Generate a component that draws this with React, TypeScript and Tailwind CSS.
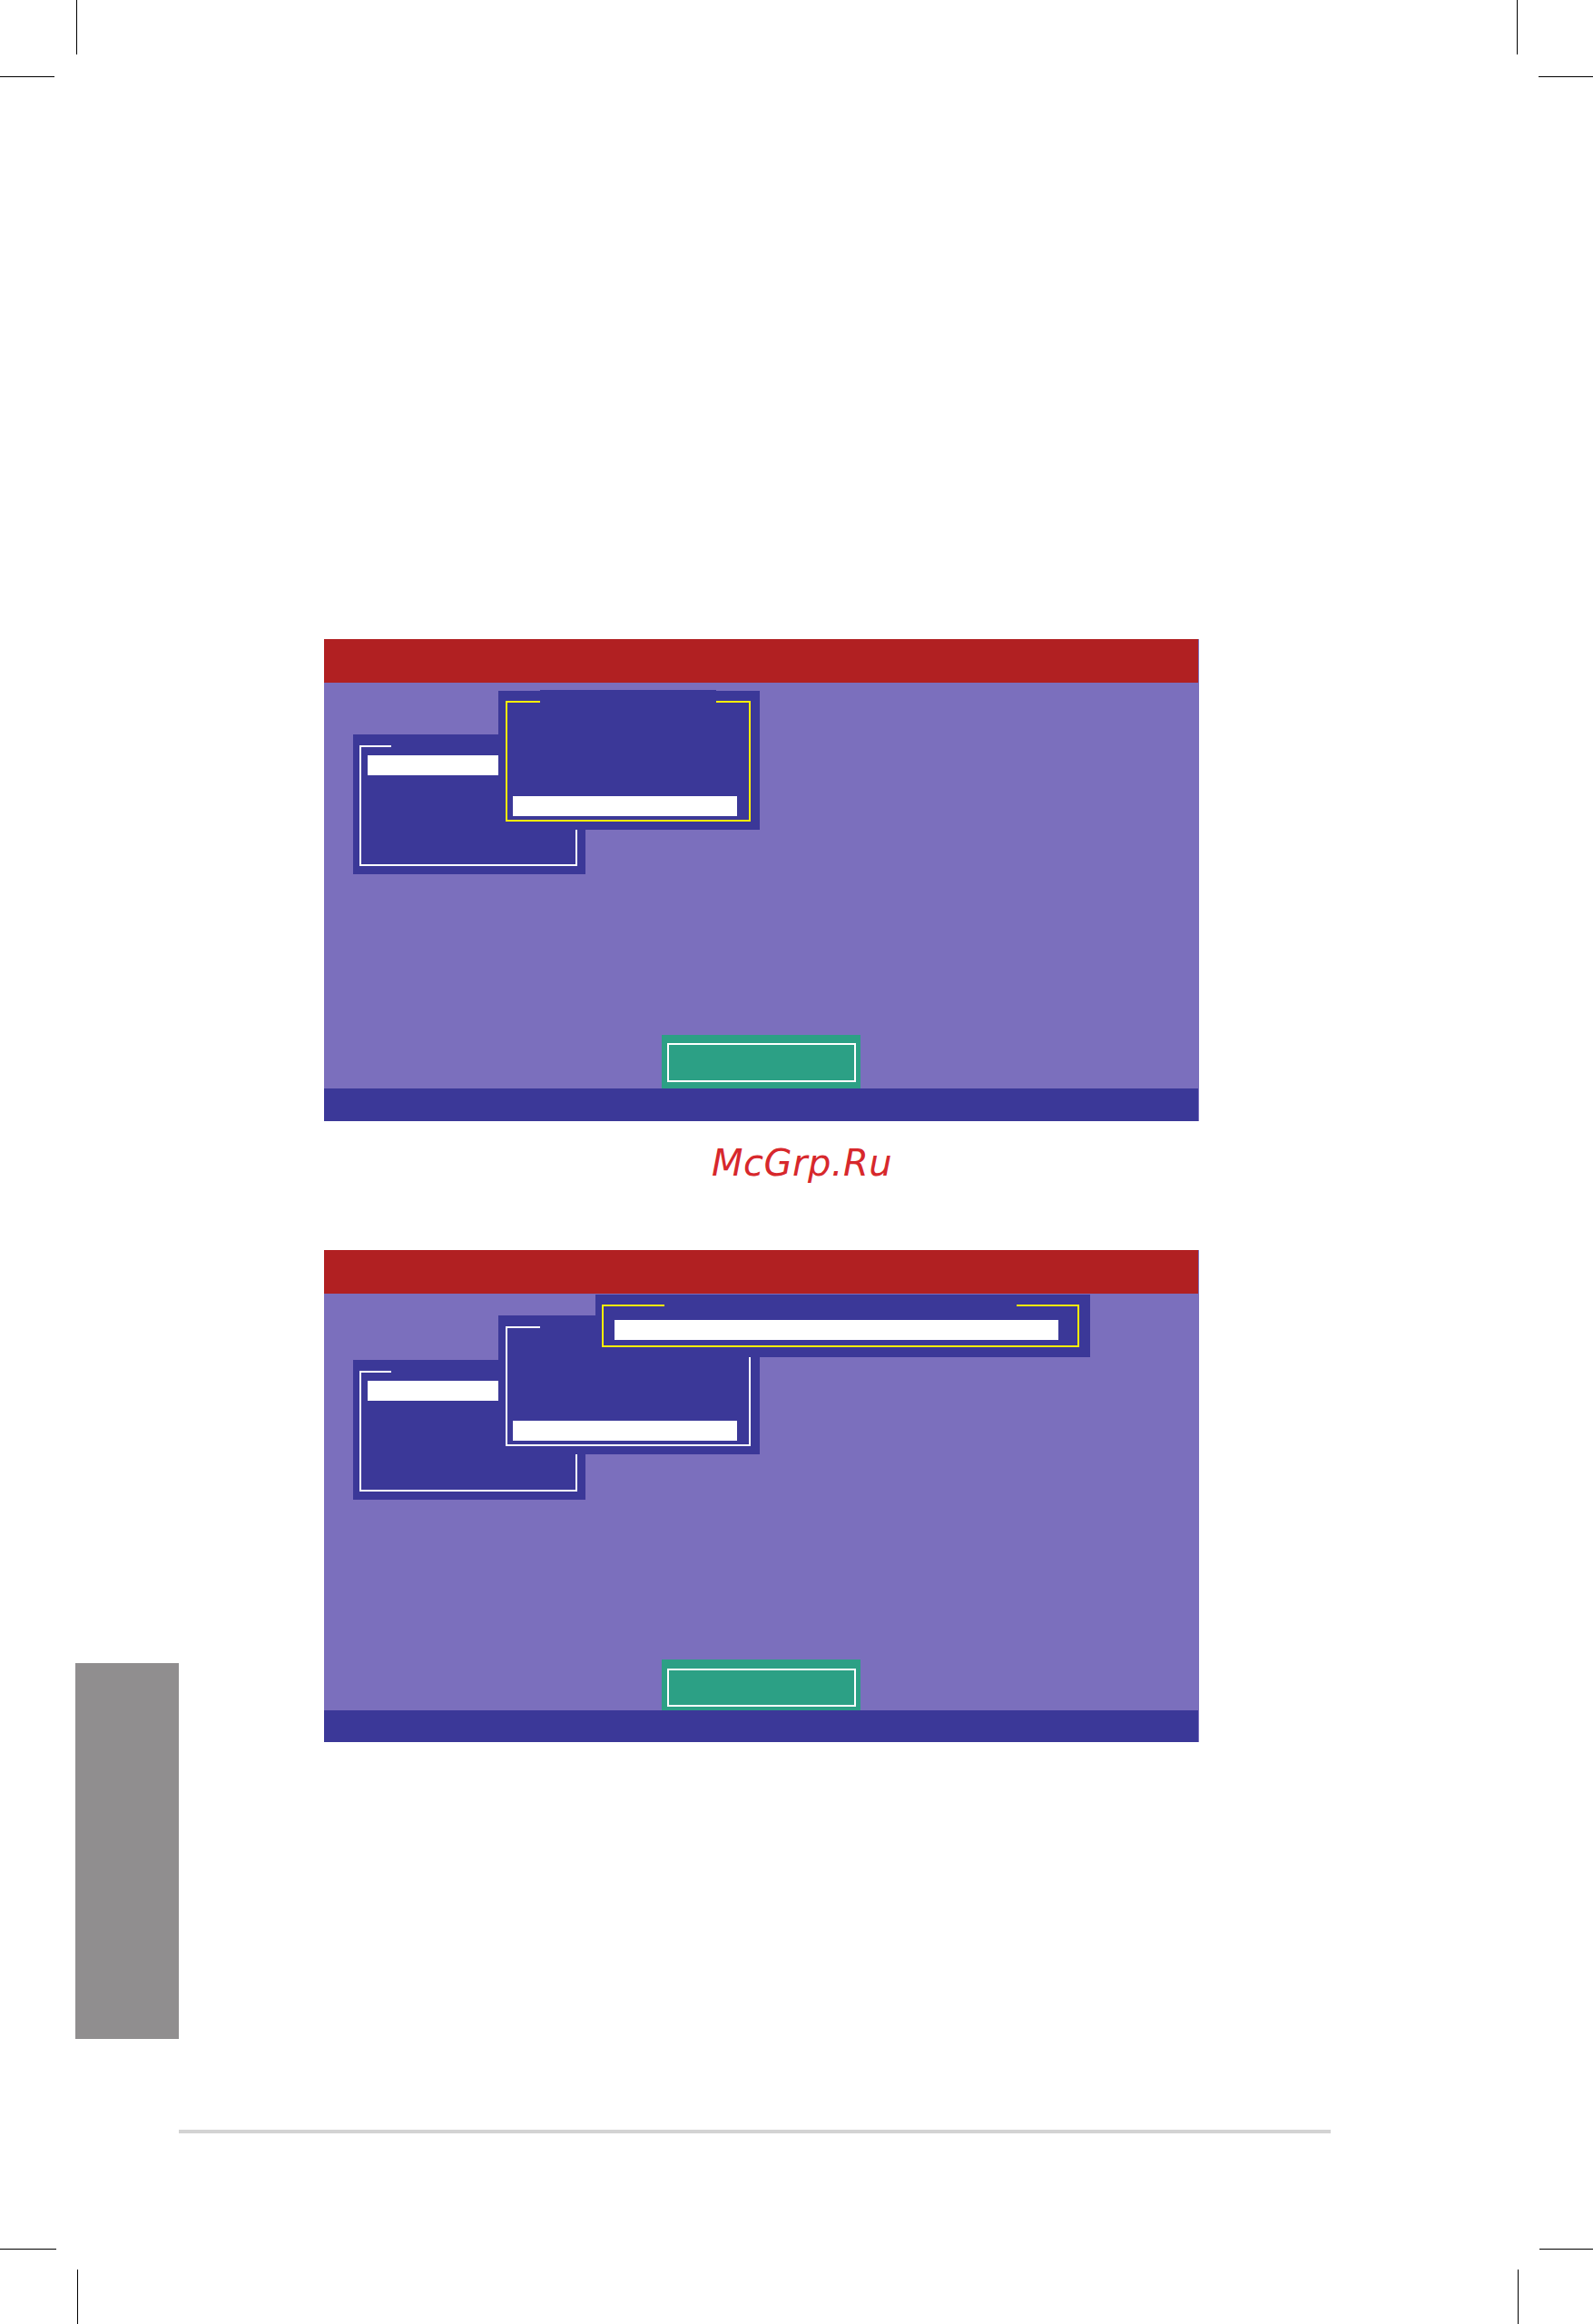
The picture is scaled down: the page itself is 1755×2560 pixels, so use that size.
// App.tsx — manual page with two BIOS-style RAID setup screens
const RED = "bg-[#b12022]";

function CropMarks() {
  return (
    <>
      <div className="absolute left-[84px] top-0 h-[60px] w-px bg-black" />
      <div className="absolute left-0 top-[84px] h-px w-[60px] bg-black" />
      <div className="absolute left-[1671px] top-0 h-[60px] w-px bg-black" />
      <div className="absolute left-[1695px] top-[84px] h-px w-[60px] bg-black" />
      <div className="absolute left-0 top-[2477px] h-px w-[62px] bg-black" />
      <div className="absolute left-[1696px] top-[2477px] h-px w-[59px] bg-black" />
      <div className="absolute left-[85px] top-[2500px] h-[60px] w-px bg-black" />
      <div className="absolute left-[1672px] top-[2500px] h-[60px] w-px bg-black" />
    </>
  );
}

function GreenButton({ tall }: { tall?: boolean }) {
  return (
    <div
      className={`mx-auto w-[219px] bg-[#2ca085] pl-[6px] pr-[5px] ${
        tall ? "h-[59px] pt-[9px] pb-[7px]" : "h-[56px] pt-[10px] pb-[4px]"
      }`}
    >
      <div className="h-full w-full border-2 border-white" />
    </div>
  );
}

// left window, same in both screens
function DiskWindow({ top }: { top: string }) {
  return (
    <div className={`absolute left-[32px] ${top} h-[154px] w-[256px] bg-[#3b3898] pt-[12px] pl-[7px] pr-[9px] pb-[9px]`}>
      <div className="relative h-full w-full border-2 border-white">
        <div className="absolute -top-[2px] left-[33px] h-[2px] w-[200px] bg-[#3b3898]" />
        <div className="ml-[7px] mt-[9px] h-[22px] w-[222px] bg-white" />
      </div>
    </div>
  );
}

function ScreenOne() {
  return (
    <div className="ml-[357px] flex h-[531px] w-[963px] flex-col shadow-[1px_0_0_#7b6fbd]">
      <div className={`h-[48px] ${RED}`} />
      <div className="relative flex flex-1 flex-col justify-end bg-[#7b6fbd]">
        <DiskWindow top="top-[57px]" />
        <div className="absolute left-[192px] top-[9px] h-[153px] w-[288px] bg-[#3b3898] pt-[11px] pl-[8px] pr-[10px] pb-[9px]">
          <div className="absolute -top-px left-[46px] h-[14px] w-[194px] bg-[#3b3898]" />
          <div className="flex h-full w-full flex-col justify-end border-2 border-[#ffee00] pb-[4px] pl-[6px]">
            <div className="h-[22px] w-[247px] bg-white" />
          </div>
        </div>
        <GreenButton tall />
      </div>
      <div className="h-[36px] bg-[#3b3898]" />
    </div>
  );
}

function ScreenTwo() {
  return (
    <div className="ml-[357px] flex h-[542px] w-[963px] flex-col shadow-[1px_0_0_#7b6fbd]">
      <div className={`h-[48px] ${RED}`} />
      <div className="relative flex flex-1 flex-col justify-end bg-[#7b6fbd]">
        <DiskWindow top="top-[73px]" />
        <div className="absolute left-[192px] top-[24px] h-[153px] w-[288px] bg-[#3b3898] pt-[12px] pl-[8px] pr-[10px] pb-[9px]">
          <div className="relative flex h-full w-full flex-col justify-end border-2 border-white pb-[4px] pl-[6px]">
            <div className="absolute -top-[2px] left-[36px] h-[2px] w-[194px] bg-[#3b3898]" />
            <div className="h-[22px] w-[247px] bg-white" />
          </div>
        </div>
        <div className="absolute left-[299px] top-px h-[69px] w-[545px] bg-[#3b3898] pt-[11px] pl-[7px] pr-[12px] pb-[11px]">
          <div className="relative h-full w-full border-2 border-[#ffee00] pt-[15px] pl-[12px]">
            <div className="absolute -top-[2px] left-[67px] h-[2px] w-[388px] bg-[#3b3898]" />
            <div className="h-[22px] w-[489px] bg-white" />
          </div>
        </div>
        <GreenButton />
      </div>
      <div className="h-[35px] bg-[#3b3898]" />
    </div>
  );
}

export default function App() {
  return (
    <div className="relative h-[2560px] w-[1755px] overflow-hidden bg-white">
      <CropMarks />
      {/* grey chapter tab on the page edge */}
      <div className="absolute left-[83px] top-[1832px] h-[414px] w-[114px] bg-[#908e8f]" />

      <div className="flex flex-col pt-[704px]">
        <ScreenOne />
        <p
          className="ml-[784px] mt-[22px] h-[48px] text-[40px] leading-[48px] italic tracking-[0.5px] text-[#d7282c]"
          style={{ fontFamily: '"DejaVu Sans", sans-serif' }}
        >
          McGrp.Ru
        </p>
        <div className="mt-[72px]">
          <ScreenTwo />
        </div>
        <div className="ml-[197px] mt-[427px] h-[4px] w-[1269px] bg-[#d3d3d3]" />
      </div>
    </div>
  );
}
